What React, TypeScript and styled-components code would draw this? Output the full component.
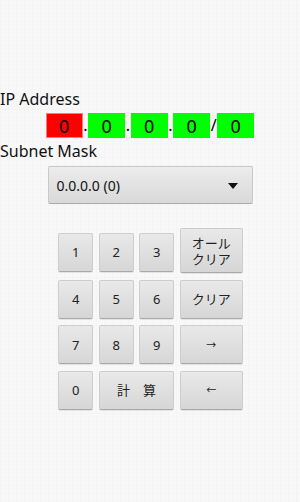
import React from 'react';
import styled, { createGlobalStyle } from 'styled-components';

const GlobalStyle = createGlobalStyle`
  html, body {
    margin: 0;
    padding: 0;
  }
  body {
    background-color: #f8f8f8;
    background-image:
      repeating-linear-gradient(0deg, rgba(0, 0, 0, 0.012) 0 1px, transparent 1px 8px),
      repeating-linear-gradient(90deg, rgba(0, 0, 0, 0.012) 0 1px, transparent 1px 8px);
    font-family: 'Noto Sans', 'Noto Sans CJK JP', sans-serif;
    color: #111;
  }
`;

const Screen = styled.div`
  width: 300px;
  height: 502px;
  padding-top: 88px;
  box-sizing: border-box;
  display: flex;
  flex-direction: column;
`;

const Label = styled.div`
  font-size: 16px;
  line-height: 22px;
  color: #111;
`;

const IpRow = styled.div`
  display: flex;
  justify-content: center;
  align-items: stretch;
  margin-top: 3px;
  height: 25px;
`;

const Octet = styled.div<{ $active?: boolean }>`
  width: 37px;
  box-sizing: border-box;
  background: ${(p) => (p.$active ? '#ff0000' : '#00ff00')};
  border: ${(p) => (p.$active ? '1px solid #ff7a7a' : 'none')};
  display: flex;
  align-items: center;
  justify-content: center;
  font-size: 18px;
  color: #000;
`;

const Sep = styled.div<{ $wide?: boolean }>`
  width: ${(p) => (p.$wide ? '7px' : '5.5px')};
  font-size: 16px;
  line-height: 25px;
  text-align: center;
  color: #000;
`;

const SubnetLabel = styled(Label)`
  margin-top: 2px;
`;

const Spinner = styled.div`
  align-self: center;
  margin-top: 4px;
  width: 205px;
  height: 38px;
  box-sizing: border-box;
  border: 1px solid #c9c9c9;
  border-bottom-color: #a8a8a8;
  border-radius: 2px;
  background: linear-gradient(#ececec, #d9d9d9);
  display: flex;
  align-items: center;
  justify-content: space-between;
  padding: 0 14px 0 8px;
  font-size: 14px;
  color: #111;
`;

const Arrow = styled.div`
  width: 0;
  height: 0;
  border-left: 5px solid transparent;
  border-right: 5px solid transparent;
  border-top: 6px solid #111;
  margin-top: 1px;
`;

const Keypad = styled.div`
  align-self: center;
  margin-top: 24px;
  display: grid;
  grid-template-columns: 35px 35px 35px 63px;
  grid-template-rows: 45px 39px 39px 39px;
  column-gap: 5.5px;
  row-gap: 6.5px;
  margin-left: 1px;
`;

const Key = styled.button<{ $span?: number; $tall?: boolean; $small?: boolean }>`
  grid-column: span ${(p) => p.$span ?? 1};
  height: ${(p) => (p.$tall ? '45px' : '39px')};
  align-self: center;
  padding: 0;
  box-sizing: border-box;
  border: 1px solid #cdcdcd;
  border-bottom-color: #a9a9a9;
  border-radius: 2px;
  background: linear-gradient(#e9e9e9, #d6d6d6);
  box-shadow: 0 1px 0 rgba(0, 0, 0, 0.08);
  font-family: 'Noto Sans', 'Noto Sans CJK JP', sans-serif;
  font-size: ${(p) => (p.$small ? '10px' : '13px')};
  line-height: 16px;
  color: #222;
  display: flex;
  align-items: center;
  justify-content: center;
  text-align: center;
`;

const TopKey = styled(Key)`
  position: relative;
  top: 1.5px;
`;

const keys: { label: React.ReactNode; span?: number; tall?: boolean; small?: boolean }[] = [
  { label: '1' },
  { label: '2' },
  { label: '3' },
  {
    label: (
      <>
        オール
        <br />
        クリア
      </>
    ),
    tall: true,
  },
  { label: '4' },
  { label: '5' },
  { label: '6' },
  { label: 'クリア' },
  { label: '7' },
  { label: '8' },
  { label: '9' },
  { label: '→', small: true },
  { label: '0' },
  { label: '計\u3000算', span: 2 },
  { label: '←', small: true },
];

export default function App() {
  return (
    <>
      <GlobalStyle />
      <Screen>
        <Label>IP Address</Label>
        <IpRow>
          <Octet $active>0</Octet>
          <Sep>.</Sep>
          <Octet>0</Octet>
          <Sep>.</Sep>
          <Octet>0</Octet>
          <Sep>.</Sep>
          <Octet>0</Octet>
          <Sep $wide>/</Sep>
          <Octet>0</Octet>
        </IpRow>
        <SubnetLabel>Subnet Mask</SubnetLabel>
        <Spinner>
          <span>0.0.0.0 (0)</span>
          <Arrow />
        </Spinner>
        <Keypad>
          {keys.map((k, i) =>
            i < 3 ? (
              <TopKey key={i}>{k.label}</TopKey>
            ) : (
              <Key key={i} $span={k.span} $tall={k.tall} $small={k.small}>
                {k.label}
              </Key>
            )
          )}
        </Keypad>
      </Screen>
    </>
  );
}
